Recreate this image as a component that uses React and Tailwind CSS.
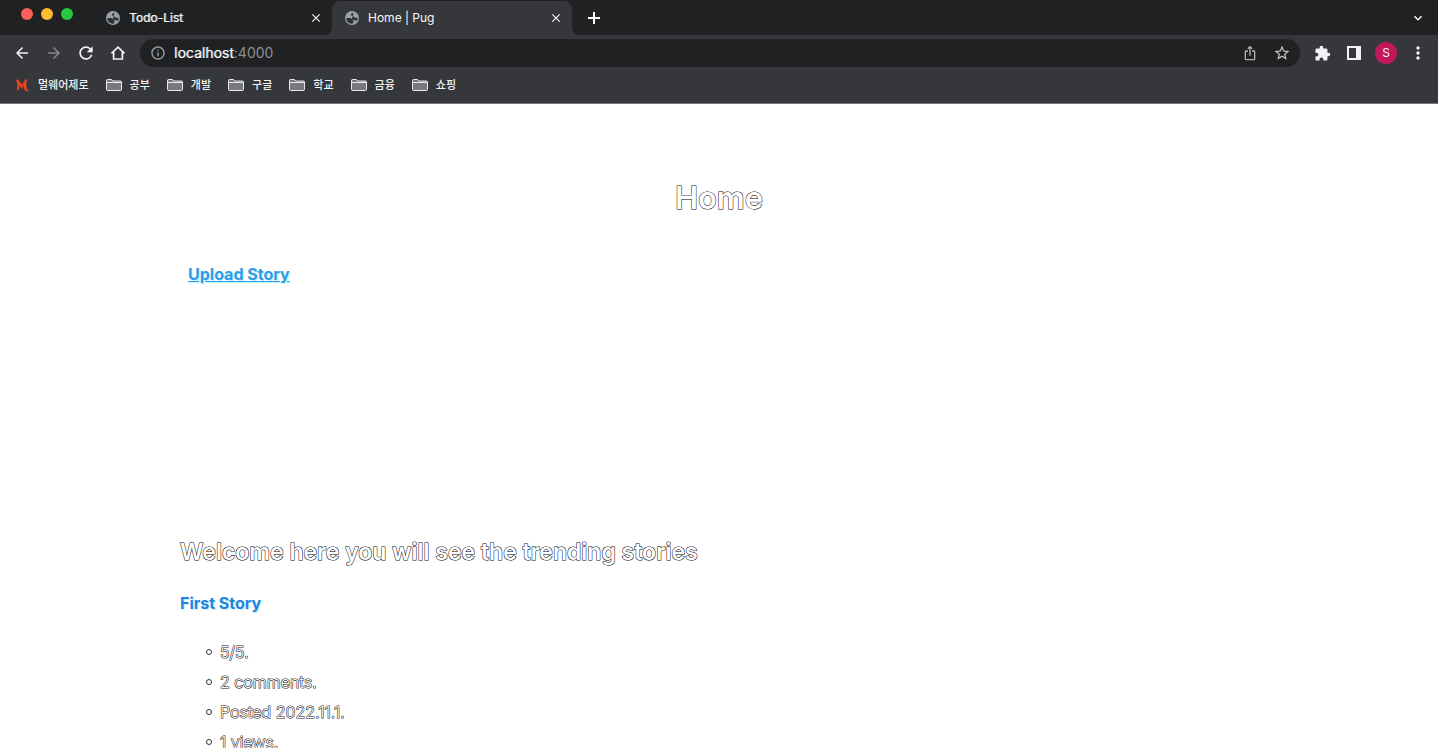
import React from "react";
import {
  MdArrowBack,
  MdArrowForward,
  MdClose,
  MdExpandMore,
  MdExtension,
  MdInfoOutline,
  MdIosShare,
  MdMoreVert,
  MdRefresh,
  MdStarBorder,
} from "react-icons/md";

const folders = ["공부", "개발", "구글", "학교", "금융", "쇼핑"];
const storyDetails = ["5/5.", "2 comments.", "Posted 2022.11.1.", "1 views."];

function TrafficLights() {
  return (
    <div className="flex w-[93px] shrink-0 gap-2 pt-2 pl-[21px]">
      <button aria-label="Close window" className="size-3 rounded-full bg-[#fb5f57]" />
      <button aria-label="Minimize window" className="size-3 rounded-full bg-[#fcbc2f]" />
      <button aria-label="Zoom window" className="size-3 rounded-full bg-[#28c840]" />
    </div>
  );
}

function GlobeIcon() {
  return (
    <svg viewBox="0 0 16 16" className="size-4 shrink-0">
      <circle cx="8" cy="8" r="7" fill="#9aa0a6" />
      <path
        d="M9.500 2.700C8.500 3.300 7 3.600 6.800 4.700c-.2 1.300 1.400 1.300 2.400 1.500 1 .3.600 1.500 1.800 1.600 1 .1 1.800-.3 2.600.4-.1 1-.4 1.900-1 2.700-1-.2-1.500-.8-2.700-.8-1-.1-1.300-.3-2-.8z"
        fill="#2b2d31"
      />
      <path
        d="M2.400 8.200c1.600-.2 3.600-.1 4.700.4 1.100.5.900 1.700 2 2 .9.300 1 1.300.2 1.700-.6.300-.6.900-.7 1.400C5 13.800 2.400 11.400 2.400 8.200z"
        fill="#2b2d31"
      />
    </svg>
  );
}

function Tab({ title, active }) {
  return (
    <div
      className={
        active
          ? "relative mt-px flex w-60 items-center rounded-t-lg bg-[#35373b] px-3 pb-px text-[#f5f6f7]"
          : "relative mt-px flex w-[239px] items-center px-3 pb-px text-[#f5f6f7] [text-shadow:1px_0_0_#f5f6f788]"
      }
    >
      {active && (
        <>
          <span className="absolute bottom-0 -left-2 size-2 bg-[radial-gradient(circle_at_0_0,#202123_8px,#35373b_8px)]" />
          <span className="absolute -right-2 bottom-0 size-2 bg-[radial-gradient(circle_at_100%_0,#202123_8px,#35373b_8px)]" />
        </>
      )}
      <GlobeIcon />
      <span className="ml-2 flex-1 text-xs">{title}</span>
      <button aria-label={"Close " + title} className="-mr-1 flex size-4 items-center justify-center">
        <MdClose className="size-[14px]" />
      </button>
    </div>
  );
}

function ToolButton({ label, children }) {
  return (
    <button aria-label={label} className="flex size-7 shrink-0 items-center justify-center text-[#f1f3f4]">
      {children}
    </button>
  );
}

function HomeIcon() {
  return (
    <svg viewBox="0 0 18 18" className="size-[18px]" fill="none" stroke="currentColor" strokeWidth="1.7">
      <path d="M2.5 9.4 9 3.2l6.500 6.200M4.600 8v7h8.800V8" />
    </svg>
  );
}

function FolderIcon() {
  return (
    <svg viewBox="0 0 16 12" className="h-3 w-4" fill="#77797c" stroke="#e8eaed">
      <path d="M.5 10.500v-9q0-1 1-1h4l1.300 1.500h7.700q1 0 1 1v7.500q0 1-1 1h-13q-1 0-1-1z" />
      <path d="M.5 3.500h15" />
    </svg>
  );
}

function MalwareIcon() {
  return (
    <svg viewBox="0 0 14 14" className="size-[14px]">
      <path
        d="M0 1.300q3.400 0 4.700 2L7 6.700l2.500-4Q10.300 1.300 12.500 1.300q-1 1.200-1 3.200v4q0 3 2.500 4.700-5.300.4-5.300-4.200V7.500L6.800 10.800 4.400 7.500v1.800q0 3-3.200 3.500 1-1.500 1-3.300V5.500Q2 3 0 1.300z"
        fill="#e2451f"
      />
    </svg>
  );
}

function BrowserChrome() {
  return (
    <header className="shrink-0 border-b border-[#77777a] bg-[#35373b] font-[Inter,'Noto_Sans_CJK_KR',sans-serif]">
      <div className="flex h-[35px] bg-[#202123]">
        <TrafficLights />
        <Tab title="Todo-List" />
        <Tab title="Home | Pug" active />
        <button aria-label="New tab" className="ml-3 flex w-5 items-center justify-center text-white">
          <svg viewBox="0 0 12 12" className="size-3" fill="none" stroke="currentColor" strokeWidth="2">
            <path d="M6 0v12M0 6h12" />
          </svg>
        </button>
        <button aria-label="Search tabs" className="mr-3 ml-auto flex w-4 items-center justify-center text-white">
          <MdExpandMore className="size-4" />
        </button>
      </div>
      <div className="flex h-9 items-center gap-1 pr-[6px] pl-2">
        <ToolButton label="Back"><MdArrowBack className="size-[18px]" /></ToolButton>
        <ToolButton label="Forward"><MdArrowForward className="size-[18px] text-[#858789]" /></ToolButton>
        <ToolButton label="Reload"><MdRefresh className="size-5" /></ToolButton>
        <ToolButton label="Home page"><HomeIcon /></ToolButton>
        <div className="mx-1 flex h-7 min-w-0 flex-1 items-center rounded-full bg-[#202123] pr-1 pl-[10px]">
          <MdInfoOutline className="size-4 shrink-0 text-[#9aa0a6]" />
          <a href="http://localhost:4000" className="ml-2 flex-1 text-sm text-[#8b8f94]">
            <span className="text-white [text-shadow:1px_0_0_#ffffff66]">localhost</span>:4000
          </a>
          <div className="flex gap-1">
            <ToolButton label="Share"><MdIosShare className="size-4 text-[#b0b3b6]" /></ToolButton>
            <ToolButton label="Bookmark"><MdStarBorder className="size-[18px] text-[#c4c7c9]" /></ToolButton>
          </div>
        </div>
        <ToolButton label="Extensions"><MdExtension className="size-[17px]" /></ToolButton>
        <ToolButton label="Side panel">
          <svg viewBox="0 0 14 14" className="size-[14px]" fill="currentColor">
            <path fillRule="evenodd" d="M0 0h14v14H0zM2 2v10h7V2z" />
          </svg>
        </ToolButton>
        <ToolButton label="Profile">
          <span className="flex size-[22px] items-center justify-center rounded-full bg-[#c2185b] text-xs">S</span>
        </ToolButton>
        <ToolButton label="Menu"><MdMoreVert className="size-5" /></ToolButton>
      </div>
      <nav className="flex h-8 items-center gap-[17px] pb-1 pl-[15px] text-[11px] font-medium text-[#f1f3f4]">
        <a href="#malware" className="flex items-center gap-[9px]"><MalwareIcon />멀웨어제로</a>
        {folders.map((name) => (
          <button key={name} className="flex items-center gap-2"><FolderIcon />{name}</button>
        ))}
      </nav>
    </header>
  );
}

export default function App() {
  return (
    <div className="flex h-screen flex-col bg-white">
      <BrowserChrome />
      <main className="min-h-0 flex-1 overflow-y-auto font-[Inter,sans-serif] text-white antialiased [scrollbar-width:none]">
        <div className="mx-auto max-w-[1078px] pt-[74px] pb-10">
          <h1 className="text-center text-[31px] leading-10 font-semibold [paint-order:stroke_fill] [-webkit-text-stroke:1px_#000]">
            Home
          </h1>
          <div className="mt-11 px-2">
            <a href="#upload" className="text-base leading-6 font-bold text-[#2f9de6] underline [text-shadow:1px_1px_0_#c4f5ff]">
              Upload Story
            </a>
          </div>
          <h2 className="mt-[250px] text-[23px] leading-8 font-semibold [paint-order:stroke_fill] [-webkit-text-stroke:1px_#000]">
            Welcome here you will see the trending stories
          </h2>
          <h3 className="mt-[23px] text-base leading-6 font-bold">
            <a href="#first-story" className="text-[#2483da] [text-shadow:1px_1px_0_#c4f5ff]">First Story</a>
          </h3>
          <ul className="mt-[22px] flex flex-col pl-[26px] text-base leading-[30px] font-light [paint-order:stroke_fill] [-webkit-text-stroke:1px_#111]">
            {storyDetails.map((detail) => (
              <li key={detail} className="flex items-center gap-2">
                <span className="size-[6px] rounded-full border border-[#333]" />
                {detail}
              </li>
            ))}
          </ul>
        </div>
      </main>
    </div>
  );
}
